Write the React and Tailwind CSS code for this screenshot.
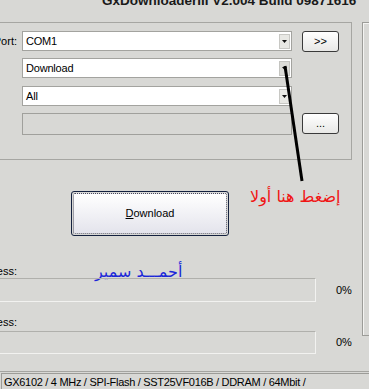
import React from "react";

function Arrow() {
  return (
    <svg width="5" height="3" viewBox="0 0 5 3">
      <polygon points="0,0 5,0 2.5,3" fill="#111" />
    </svg>
  );
}

function Combo({ value, dim }) {
  return (
    <div className="w-[270px] h-[20px] shrink-0 bg-white border border-[#a3a39f] flex items-center">
      <div className="flex-1 pl-[3px] text-[11px] leading-none text-black tracking-[-0.2px]">{value}</div>
      <div
        className={
          "w-[11px] h-[15px] mr-[1px] flex items-center justify-center border " +
          (dim ? "bg-[#dcdcd8] border-[#c4c4c0]" : "bg-[#e8e8e4] border-[#c8c8c4]")
        }
      >
        <Arrow />
      </div>
    </div>
  );
}

function SmallBtn({ children }) {
  return (
    <div className="ml-[10px] w-[37px] h-[21px] shrink-0 rounded-[3px] border border-[#3a3a3a] bg-gradient-to-b from-white to-[#e8e8e6] flex items-center justify-center text-[11px] leading-none text-black">
      {children}
    </div>
  );
}

export default function App() {
  return (
    <div className="relative w-[369px] h-[389px] overflow-hidden bg-[#d8d8d5] flex flex-col font-['Liberation_Sans',Arial,sans-serif] text-black">
      <div className="-mt-[6px] h-[14px] shrink-0 leading-[14px] pl-[102px] text-[13.5px] font-bold text-[#1a1a1a] whitespace-nowrap">
        GxDownloaderIII V2.004 Build 09871616
      </div>

      <div className="mt-[14px] flex items-start shrink-0">
        <div className="w-[352px] shrink-0 flex flex-col">
          {/* group box */}
          <div className="-ml-[10px] w-[362px] h-[138px] shrink-0 border border-[#a6a6a2] pt-[8px]">
            <div className="flex items-center h-[20px]">
              <div className="w-[31px] shrink-0 pr-[5px] text-right text-[11px] leading-none whitespace-nowrap">Port:</div>
              <Combo value="COM1" />
              <SmallBtn>&gt;&gt;</SmallBtn>
            </div>
            <div className="flex items-center h-[20px] mt-[7px]">
              <div className="w-[31px] shrink-0" />
              <Combo value="Download" dim />
            </div>
            <div className="flex items-center h-[20px] mt-[8px]">
              <div className="w-[31px] shrink-0" />
              <Combo value="All" />
            </div>
            <div className="flex items-start h-[22px] mt-[7px]">
              <div className="w-[31px] shrink-0" />
              <div className="w-[270px] h-[22px] shrink-0 border border-[#a0a09c] bg-[#d8d8d5]" />
              <SmallBtn>...</SmallBtn>
            </div>
          </div>

          {/* download button + hint */}
          <div className="flex items-start mt-[31px] shrink-0">
            <div className="ml-[71px] w-[158px] h-[45px] shrink-0 rounded-[3px] border border-[#14213f] p-[1px]">
              <div className="w-full h-full rounded-[2px] border border-dotted border-[#4a4a5a] bg-gradient-to-b from-white to-[#e4e4ec] flex items-center justify-center text-[11px] leading-none">
                <span><span className="underline">D</span>ownload</span>
              </div>
            </div>
            <div
              dir="rtl"
              className="ml-[21px] -mt-[8px] text-[16px] leading-[28px] text-[#f01414] font-['DejaVu_Sans',sans-serif] whitespace-nowrap"
            >
              إضغط هنا أولا
            </div>
          </div>

          {/* progress 1 */}
          <div className="flex items-center h-[13px] mt-[29px] shrink-0">
            <div className="-ml-[40px] w-[57px] shrink-0 text-right text-[11px] leading-none">Progress:</div>
            <div
              dir="rtl"
              className="ml-[78px] text-[16px] leading-none text-[#1c28d8] font-['DejaVu_Sans',sans-serif] whitespace-nowrap"
            >
              أحمـــد سمير
            </div>
          </div>
          <div className="flex items-center h-[24px] shrink-0">
            <div className="-ml-[20px] w-[336px] h-[24px] shrink-0 border border-[#b0b0ac] border-r-[#f2f2f0] border-b-[#f2f2f0]" />
            <div className="ml-[20px] text-[11px] leading-none">0%</div>
          </div>

          {/* progress 2 */}
          <div className="flex items-center h-[13px] mt-[14px] shrink-0">
            <div className="-ml-[40px] w-[57px] shrink-0 text-right text-[11px] leading-none">Progress:</div>
          </div>
          <div className="flex items-center h-[23px] mt-[2px] shrink-0">
            <div className="-ml-[20px] w-[336px] h-[23px] shrink-0 border border-[#b0b0ac] border-r-[#f2f2f0] border-b-[#f2f2f0]" />
            <div className="ml-[20px] text-[11px] leading-none">0%</div>
          </div>
        </div>

        <div className="ml-[10px] flex-1 h-[314px] border-l border-t border-b border-[#9c9c98] shadow-[inset_1px_1px_0_#f4f4f2]" />
      </div>

      {/* status bar */}
      <div className="mt-[17px] flex-1 border-t border-[#a4a4a0]">
        <div className="ml-[1px] mt-[1px] h-full border-l border-t border-[#9c9c98] pl-[2px] pt-[3px] text-[11px] leading-none whitespace-nowrap tracking-[-0.3px]">
          GX6102 / 4 MHz / SPI-Flash / SST25VF016B / DDRAM / 64Mbit /
        </div>
      </div>

      <svg className="absolute inset-0 pointer-events-none" width="369" height="389">
        <line x1="285" y1="66" x2="302" y2="181" stroke="#000" strokeWidth="3" />
      </svg>
    </div>
  );
}
